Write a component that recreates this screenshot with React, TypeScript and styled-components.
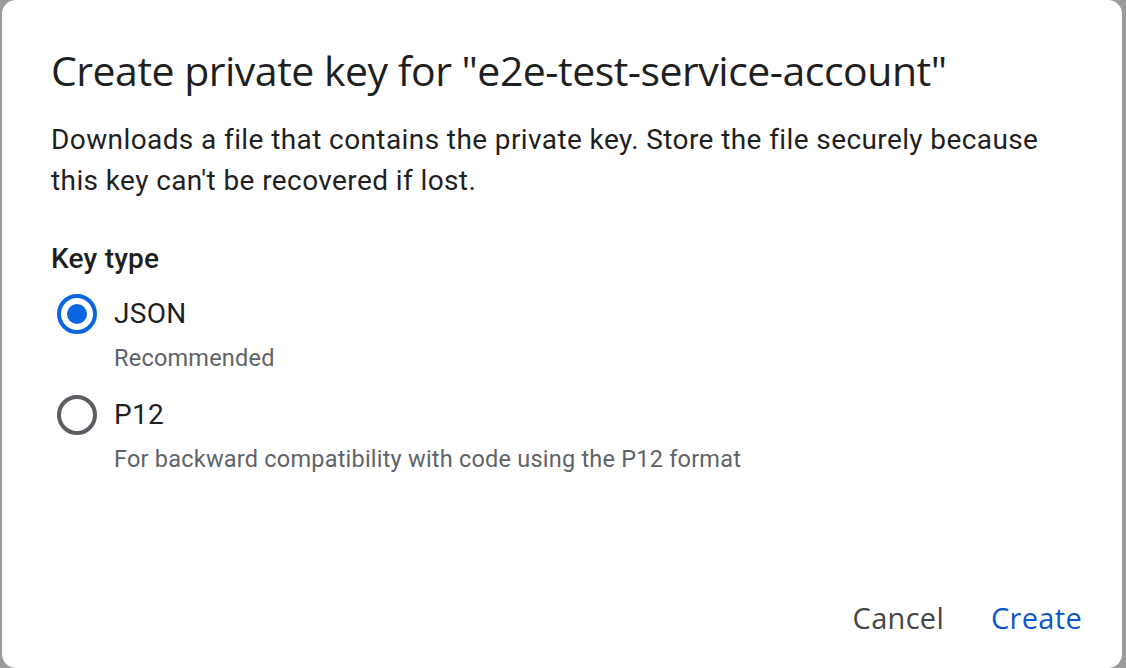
import React, { useState } from 'react'
import styled, { createGlobalStyle } from 'styled-components'

const GlobalStyle = createGlobalStyle`
  html, body {
    margin: 0;
    padding: 0;
    height: 100%;
    background: #9b9b9b;
    overflow: hidden;
  }
  * {
    box-sizing: border-box;
  }
`

const Backdrop = styled.div`
  display: flex;
  width: 1126px;
  height: 668px;
  padding-left: 2px;
`

const Dialog = styled.div`
  display: flex;
  flex-direction: column;
  width: 1120px;
  height: 668px;
  background: #ffffff;
  border-radius: 14px;
  padding: 42px 40px 0 49px;
`

const Title = styled.h1`
  margin: 0;
  font-family: 'Open Sans', sans-serif;
  font-weight: 400;
  font-size: 41px;
  line-height: 56px;
  color: #1f1f1f;
  letter-spacing: -0.5px;
`

const Body = styled.p`
  margin: 21px 0 0;
  font-family: Roboto, sans-serif;
  font-size: 28px;
  line-height: 41px;
  letter-spacing: 0.4px;
  color: #1f1f1f;
  max-width: 1010px;
`

const Label = styled.div`
  margin-top: 38px;
  font-family: Roboto, sans-serif;
  font-weight: 500;
  font-size: 28px;
  line-height: 40px;
  letter-spacing: 0.2px;
  color: #1f1f1f;
`

const Options = styled.div`
  display: flex;
  flex-direction: column;
  margin-top: 15px;
`

const Option = styled.label`
  display: grid;
  grid-template-columns: 40px 1fr;
  column-gap: 17px;
  align-items: center;
  margin-left: 6px;
  cursor: pointer;
`

const Circle = styled.span<{ checked: boolean }>`
  display: flex;
  align-items: center;
  justify-content: center;
  width: 40px;
  height: 40px;
  border-radius: 50%;
  border: 4px solid ${({ checked }) => (checked ? '#0b64e0' : '#5b5e62')};

  &::after {
    content: '';
    width: 20px;
    height: 20px;
    border-radius: 50%;
    background: ${({ checked }) => (checked ? '#0b64e0' : 'transparent')};
  }
`

const OptionName = styled.span`
  font-family: Roboto, sans-serif;
  font-size: 28px;
  line-height: 40px;
  letter-spacing: 0.3px;
  color: #1f1f1f;
`

const Hint = styled.span`
  grid-column: 2;
  margin: 6px 0 19px;
  font-family: Roboto, sans-serif;
  font-size: 23.5px;
  line-height: 36px;
  letter-spacing: 0.22px;
  color: #5f6368;
`

const Actions = styled.div`
  display: flex;
  justify-content: flex-end;
  align-items: center;
  gap: 47px;
  margin-top: auto;
  margin-bottom: 30px;
`

const Button = styled.button<{ primary?: boolean }>`
  border: none;
  background: none;
  padding: 0;
  font-family: 'Open Sans', sans-serif;
  font-weight: 500;
  font-size: 29px;
  line-height: 40px;
  letter-spacing: 0.3px;
  color: ${({ primary }) => (primary ? '#0b57d0' : '#444746')};
  cursor: pointer;
`

const keyTypes = [
  { id: 'json', name: 'JSON', hint: 'Recommended' },
  { id: 'p12', name: 'P12', hint: 'For backward compatibility with code using the P12 format' },
]

export default function App() {
  const [selected, setSelected] = useState('json')

  return (
    <>
      <GlobalStyle />
      <Backdrop>
        <Dialog>
          <Title>Create private key for "e2e-test-service-account"</Title>
          <Body>
            Downloads a file that contains the private key. Store the file securely because this
            key can't be recovered if lost.
          </Body>
          <Label>Key type</Label>
          <Options>
            {keyTypes.map((k) => (
              <Option key={k.id} onClick={() => setSelected(k.id)}>
                <Circle checked={selected === k.id} />
                <OptionName>{k.name}</OptionName>
                <Hint>{k.hint}</Hint>
              </Option>
            ))}
          </Options>
          <Actions>
            <Button>Cancel</Button>
            <Button primary>Create</Button>
          </Actions>
        </Dialog>
      </Backdrop>
    </>
  )
}
